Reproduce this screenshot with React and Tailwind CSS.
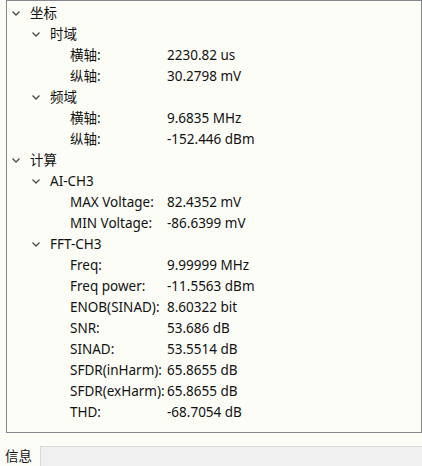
const tree = [
    {
        label: "坐标",
        children: [
            {
                label: "时域",
                items: [
                    ["横轴:", "2230.82 us"],
                    ["纵轴:", "30.2798 mV"],
                ],
            },
            {
                label: "频域",
                items: [
                    ["横轴:", "9.6835 MHz"],
                    ["纵轴:", "-152.446 dBm"],
                ],
            },
        ],
    },
    {
        label: "计算",
        children: [
            {
                label: "AI-CH3",
                items: [
                    ["MAX Voltage:", "82.4352 mV"],
                    ["MIN Voltage:", "-86.6399 mV"],
                ],
            },
            {
                label: "FFT-CH3",
                items: [
                    ["Freq:", "9.99999 MHz"],
                    ["Freq power:", "-11.5563 dBm"],
                    ["ENOB(SINAD):", "8.60322 bit"],
                    ["SNR:", "53.686 dB"],
                    ["SINAD:", "53.5514 dB"],
                    ["SFDR(inHarm):", "65.8655 dB"],
                    ["SFDR(exHarm):", "65.8655 dB"],
                    ["THD:", "-68.7054 dB"],
                ],
            },
        ],
    },
];

function Chevron() {
    return (
        <svg width="8" height="5" viewBox="0 0 8 5" className="block">
            <path d="M0.5 0.5 L4 4 L7.5 0.5" fill="none" stroke="#4a4a4a" strokeWidth="1.3" />
        </svg>
    );
}

function Branch({ label, level }) {
    return (
        <div className="flex items-center h-[21px]" style={{ paddingLeft: level * 20 }}>
            <div className="w-[23px] pl-[5px] flex items-center">
                <Chevron />
            </div>
            <span>{label}</span>
        </div>
    );
}

export default function App() {
    return (
        <div
            className="w-[422px] h-[466px] bg-[#fdfdf8] text-[#111] text-[13.5px] flex flex-col"
            style={{ fontFamily: '"Noto Sans", "Noto Sans CJK SC", sans-serif' }}
        >
            {/* 树形面板 */}
            <div className="ml-[6px] w-[416px] h-[433px] border border-[#828790] bg-[#fdfdf8] pt-[2px]">
                {tree.map((root) => (
                    <div key={root.label}>
                        <Branch label={root.label} level={0} />
                        {root.children.map((group) => (
                            <div key={group.label}>
                                <Branch label={group.label} level={1} />
                                {group.items.map(([name, value]) => (
                                    <div key={name} className="flex items-center h-[21px] pl-[63px]">
                                        <span className="w-[97px] whitespace-nowrap">{name}</span>
                                        <span className="whitespace-nowrap">{value}</span>
                                    </div>
                                ))}
                            </div>
                        ))}
                    </div>
                ))}
            </div>

            {/* 底部标签 */}
            <div className="mt-[13px] flex h-[20px]">
                <div className="w-[40px] pl-[5px] flex items-center">信息</div>
                <div className="flex-1 bg-[#f0f0f0] border-t border-l border-[#dadada]"></div>
            </div>
        </div>
    );
}
